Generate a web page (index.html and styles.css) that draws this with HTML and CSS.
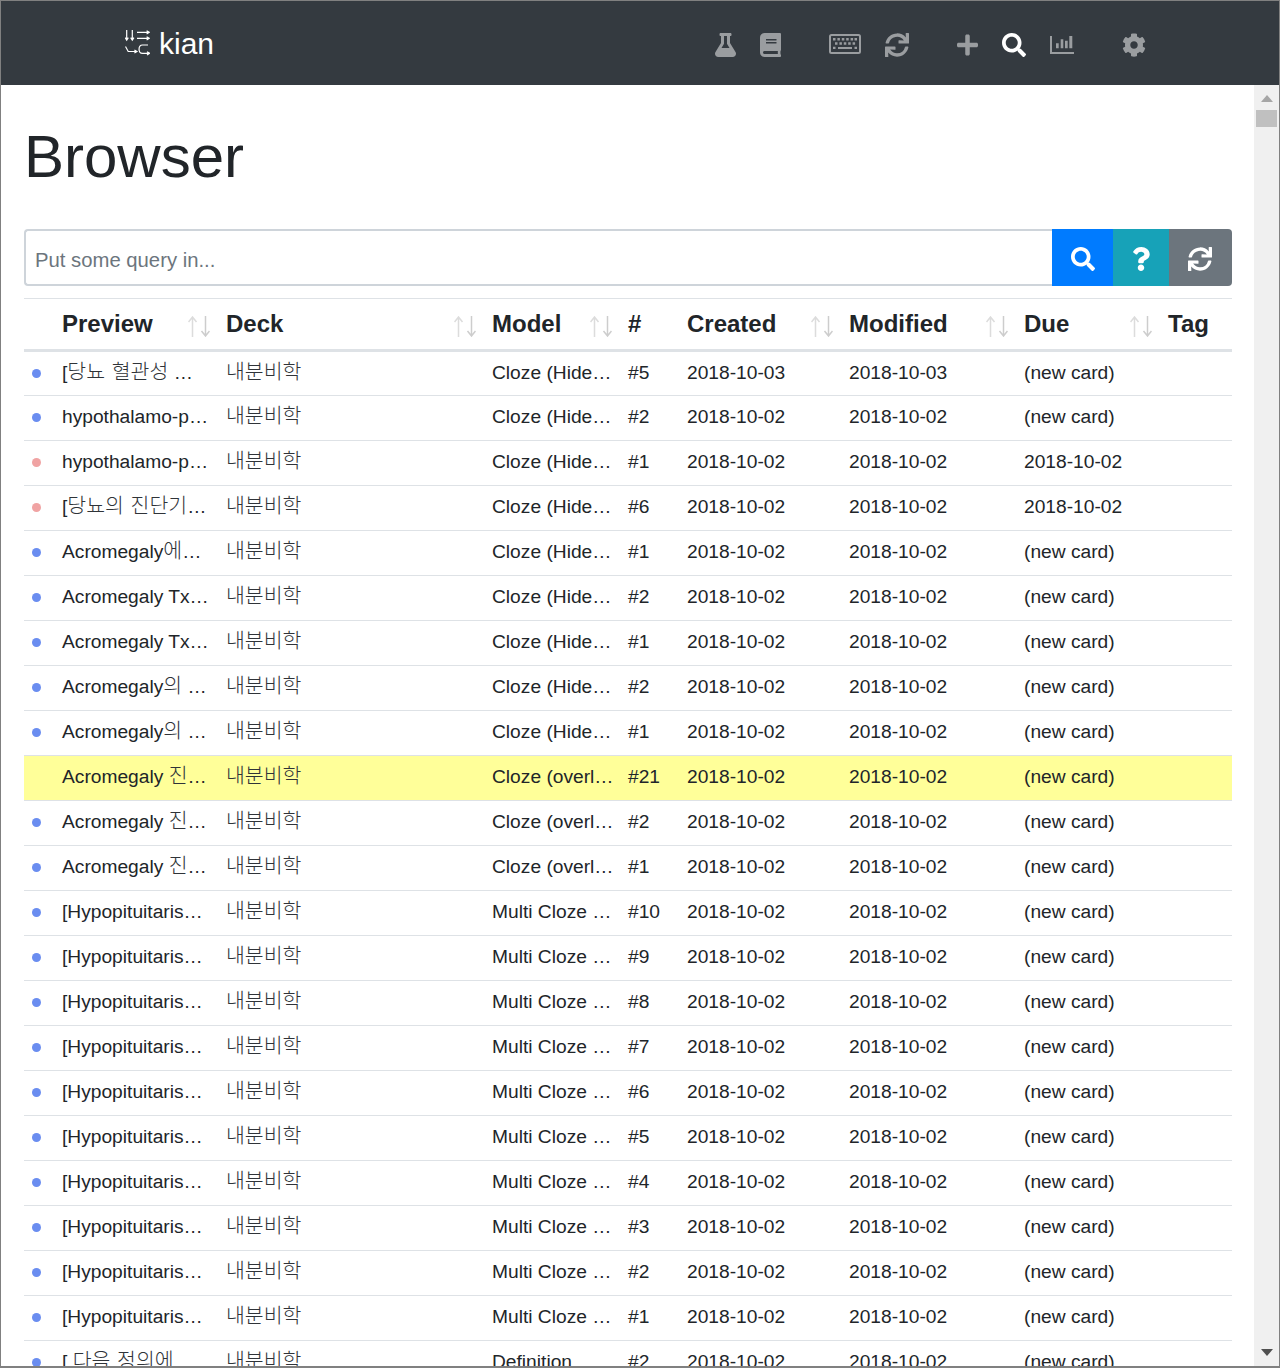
FILE: index.html
```html
<!DOCTYPE html>
<html lang="ko">
<head>
  <meta charset="UTF-8">
  <title>Browser - kian</title>
  <link rel="stylesheet" href="styles.css">
</head>
<body>
<svg class="defs" width="0" height="0">
  <symbol id="sort" viewBox="0 0 22 21">
    <path d="M4.500 21V1M.5 6l4-5 4 5" fill="none" stroke="#dcdcdc" stroke-width="1.500"/>
    <path d="M17.500 0v20M13.500 15l4 5 4-5" fill="none" stroke="#cdcdcd" stroke-width="1.500"/>
  </symbol>
</svg>
<div class="window">
  <header class="topbar">
    <a class="brand">
      <svg class="brand_icon" viewBox="0 0 25 26" fill="none" stroke="#fff" stroke-width="1.2">
        <path d="M1.7 0v10M.1 7.6l1.6 2.6 1.6-2.6M7.3 0v10M5.7 7.6l1.6 2.6 1.6-2.6"/>
        <path d="M12 2.3h12M21.6.7l2.6 1.6-2.6 1.6M12 8.3h12M21.6 6.7l2.6 1.6-2.6 1.6"/>
        <path d="M.5 16.5l2.7 5h8.6M9.4 19.9l2.6 1.6-2.6 1.6"/>
        <path d="M23 15h-5.500c-4.600 0-4.600 8.300 0 8.300H24.500M22 21.700l2.600 1.600-2.600 1.600"/>
      </svg>
      <span class="brand_name">kian</span>
    </a>
    <nav class="menu">
      <div class="menu_group">
        <svg class="ico" viewBox="0 0 448 512"><path d="M437.2 403.5L320 215V64h8c13.3 0 24-10.7 24-24V24c0-13.300-10.700-24-24-24H120c-13.300 0-24 10.700-24 24v16c0 13.300 10.700 24 24 24h8v151L10.800 403.500C-18.500 450.600 15.300 512 70.900 512h306.200c55.700 0 89.400-61.500 60.100-108.500zM137.900 320l48.200-77.600c3.700-5.200 5.800-11.600 5.800-18.400V64h64v160c0 6.900 2.200 13.200 5.800 18.400l48.200 77.600h-172z"/></svg>
        <svg class="ico" viewBox="0 0 448 512"><path d="M448 360V24c0-13.300-10.700-24-24-24H96C43 0 0 43 0 96v320c0 53 43 96 96 96h328c13.300 0 24-10.700 24-24v-16c0-7.500-3.500-14.300-8.900-18.700-4.200-15.400-4.200-59.300 0-74.700 5.400-4.300 8.900-11.100 8.900-18.600zM128 134c0-3.300 2.700-6 6-6h212c3.300 0 6 2.700 6 6v20c0 3.300-2.700 6-6 6H134c-3.300 0-6-2.700-6-6v-20zm0 64c0-3.300 2.700-6 6-6h212c3.300 0 6 2.700 6 6v20c0 3.300-2.700 6-6 6H134c-3.300 0-6-2.700-6-6v-20zm253.400 250H96c-17.700 0-32-14.300-32-32 0-17.600 14.400-32 32-32h285.400c-1.900 17.100-1.900 46.900 0 64z"/></svg>
      </div>
      <div class="menu_group">
        <svg class="ico ico_kbd" viewBox="0 0 32 24"><path transform="translate(0 -2)" fill-rule="evenodd" d="M2.500 3h27A2.500 2.500 0 0 1 32 5.500v15a2.500 2.500 0 0 1-2.500 2.500h-27A2.500 2.500 0 0 1 0 20.500v-15A2.500 2.500 0 0 1 2.500 3zm0 2a.5.5 0 0 0-.5.5v15a.5.5 0 0 0 .5.5h27a.5.5 0 0 0 .5-.5v-15a.5.5 0 0 0-.5-.5zM4 7h2.500v2.400H4zm4.400 0h2.500v2.400H8.400zm4.400 0h2.500v2.400h-2.500zm4.400 0h2.500v2.400h-2.500zm4.400 0h2.500v2.400h-2.500zm3.900 0H28v2.400h-2.500zM6 11.300h2.500v2.400H6zm4.400 0h2.500v2.400h-2.500zm4.400 0h2.500v2.400h-2.500zm4.400 0h2.500v2.400h-2.500zm4.400 0h2.500v2.400h-2.500zM4 15.700h2.500V18H4zm5 .4h14V18H9zm16.500-.4H28V18h-2.500z"/></svg>
        <svg class="ico" viewBox="0 0 512 512"><path d="M440.650 12.570l4 82.770A247.160 247.160 0 0 0 255.830 8C134.730 8 33.910 94.920 12.290 209.820A12 12 0 0 0 24.090 224h49.050a12 12 0 0 0 11.670-9.260 175.910 175.910 0 0 1 317-56.940l-101.460-4.860a12 12 0 0 0-12.570 12v47.410a12 12 0 0 0 12 12H500a12 12 0 0 0 12-12V12a12 12 0 0 0-12-12h-47.370a12 12 0 0 0-11.980 12.570zM255.830 432a175.610 175.610 0 0 1-146-77.800l101.800 4.870a12 12 0 0 0 12.570-12v-47.400a12 12 0 0 0-12-12H12a12 12 0 0 0-12 12V500a12 12 0 0 0 12 12h47.350a12 12 0 0 0 12-12.600l-4.150-82.570A247.170 247.170 0 0 0 255.830 504c121.110 0 221.930-86.920 243.550-201.820a12 12 0 0 0-11.800-14.180h-49.050a12 12 0 0 0-11.670 9.260A175.860 175.860 0 0 1 255.830 432z"/></svg>
      </div>
      <div class="menu_group">
        <svg class="ico" viewBox="0 0 448 512"><path d="M416 208H272V64c0-17.670-14.330-32-32-32h-32c-17.670 0-32 14.330-32 32v144H32c-17.670 0-32 14.330-32 32v32c0 17.670 14.330 32 32 32h144v144c0 17.670 14.330 32 32 32h32c17.670 0 32-14.330 32-32V304h144c17.670 0 32-14.330 32-32v-32c0-17.670-14.330-32-32-32z"/></svg>
        <svg class="ico ico_on" viewBox="0 0 512 512"><path d="M505 442.700L405.300 343c-4.500-4.500-10.600-7-17-7H372c27.600-35.300 44-79.700 44-128C416 93.100 322.900 0 208 0S0 93.100 0 208s93.100 208 208 208c48.300 0 92.700-16.400 128-44v16.300c0 6.400 2.500 12.500 7 17l99.700 99.700c9.400 9.400 24.600 9.400 33.900 0l28.300-28.300c9.400-9.400 9.400-24.600.1-34zM208 336c-70.700 0-128-57.200-128-128 0-70.700 57.200-128 128-128 70.700 0 128 57.200 128 128 0 70.700-57.200 128-128 128z"/></svg>
        <svg class="ico" viewBox="0 0 24 24"><path d="M0 3h2v16h22v2H0zM6 10.300h2.700v5H6zM10.700 6.300h2.600v9h-2.600zM15 7.700h2.700v7.600H15zM19.300 3h3v12.300h-3z"/></svg>
      </div>
      <div class="menu_group">
        <svg class="ico" viewBox="0 0 512 512"><path d="M487.400 315.700l-42.600-24.600c4.300-23.200 4.300-47 0-70.200l42.600-24.600c4.900-2.800 7.100-8.600 5.500-14-11.100-35.600-30-67.800-54.700-94.600-3.800-4.100-10-5.100-14.800-2.300L380.800 110c-17.900-15.400-38.500-27.300-60.800-35.100V25.800c0-5.600-3.900-10.500-9.400-11.700-36.700-8.200-74.300-7.800-109.200 0-5.500 1.200-9.400 6.100-9.400 11.700V75c-22.200 7.900-42.800 19.800-60.800 35.100L88.700 85.500c-4.900-2.800-11-1.900-14.800 2.300-24.700 26.700-43.600 58.900-54.700 94.600-1.700 5.400.6 11.200 5.500 14L67.300 221c-4.300 23.200-4.300 47 0 70.200l-42.600 24.600c-4.900 2.800-7.100 8.600-5.500 14 11.100 35.600 30 67.800 54.700 94.600 3.800 4.100 10 5.100 14.800 2.300l42.600-24.600c17.900 15.400 38.500 27.300 60.800 35.100v49.200c0 5.600 3.900 10.500 9.400 11.700 36.700 8.200 74.300 7.800 109.200 0 5.500-1.200 9.400-6.100 9.400-11.700v-49.200c22.200-7.900 42.800-19.800 60.800-35.100l42.600 24.600c4.900 2.800 11 1.900 14.800-2.300 24.700-26.700 43.600-58.900 54.700-94.600 1.500-5.500-.7-11.300-5.600-14.100zM256 336c-44.100 0-80-35.900-80-80s35.900-80 80-80 80 35.900 80 80-35.900 80-80 80z"/></svg>
      </div>
    </nav>
  </header>

  <div class="body_wrap">
    <main class="content">
      <h1 class="title">Browser</h1>

      <form class="search">
        <input class="search_input" type="text" placeholder="Put some query in...">
        <button class="btn btn_blue" type="button"><svg viewBox="0 0 512 512"><path d="M505 442.700L405.300 343c-4.500-4.500-10.600-7-17-7H372c27.600-35.300 44-79.700 44-128C416 93.100 322.900 0 208 0S0 93.100 0 208s93.100 208 208 208c48.300 0 92.700-16.400 128-44v16.300c0 6.400 2.500 12.500 7 17l99.700 99.700c9.400 9.400 24.600 9.400 33.900 0l28.300-28.300c9.400-9.400 9.400-24.600.1-34zM208 336c-70.700 0-128-57.200-128-128 0-70.700 57.200-128 128-128 70.700 0 128 57.200 128 128 0 70.700-57.200 128-128 128z"/></svg></button>
        <button class="btn btn_teal" type="button"><svg viewBox="0 0 384 512"><path d="M202.021 0C122.202 0 70.503 32.703 29.914 91.026c-7.363 10.580-5.093 25.086 5.178 32.874l43.138 32.709c10.373 7.865 25.132 6.026 33.253-4.148 25.049-31.381 43.630-49.449 82.757-49.449 30.764 0 68.816 19.799 68.816 49.631 0 22.552-18.617 34.134-48.993 51.164-35.423 19.860-82.299 44.576-82.299 106.405V320c0 13.255 10.745 24 24 24h72.471c13.255 0 24-10.745 24-24v-5.773c0-42.860 125.268-44.645 125.268-160.627C377.504 66.256 286.902 0 202.021 0zM192 373.459c-38.196 0-69.271 31.075-69.271 69.271 0 38.195 31.075 69.270 69.271 69.270s69.271-31.075 69.271-69.271-31.075-69.270-69.271-69.270z"/></svg></button>
        <button class="btn btn_gray" type="button"><svg viewBox="0 0 512 512"><path d="M440.650 12.570l4 82.770A247.160 247.160 0 0 0 255.830 8C134.730 8 33.910 94.920 12.290 209.820A12 12 0 0 0 24.090 224h49.050a12 12 0 0 0 11.670-9.260 175.910 175.910 0 0 1 317-56.940l-101.460-4.860a12 12 0 0 0-12.570 12v47.410a12 12 0 0 0 12 12H500a12 12 0 0 0 12-12V12a12 12 0 0 0-12-12h-47.370a12 12 0 0 0-11.980 12.570zM255.830 432a175.610 175.610 0 0 1-146-77.800l101.800 4.870a12 12 0 0 0 12.570-12v-47.400a12 12 0 0 0-12-12H12a12 12 0 0 0-12 12V500a12 12 0 0 0 12 12h47.350a12 12 0 0 0 12-12.600l-4.150-82.570A247.170 247.170 0 0 0 255.830 504c121.110 0 221.930-86.920 243.550-201.820a12 12 0 0 0-11.800-14.180h-49.050a12 12 0 0 0-11.670 9.260A175.860 175.860 0 0 1 255.830 432z"/></svg></button>
      </form>

      <table class="cards">
        <colgroup>
          <col class="c_dot"><col class="c_preview"><col class="c_deck"><col class="c_model"><col class="c_num"><col class="c_created"><col class="c_modified"><col class="c_due"><col class="c_tag">
        </colgroup>
        <thead>
          <tr>
            <th></th>
            <th><div class="th_in">Preview<svg class="sort"><use href="#sort"/></svg></div></th>
            <th><div class="th_in">Deck<svg class="sort"><use href="#sort"/></svg></div></th>
            <th><div class="th_in">Model<svg class="sort"><use href="#sort"/></svg></div></th>
            <th><div class="th_in">#</div></th>
            <th><div class="th_in">Created<svg class="sort"><use href="#sort"/></svg></div></th>
            <th><div class="th_in">Modified<svg class="sort"><use href="#sort"/></svg></div></th>
            <th><div class="th_in">Due<svg class="sort"><use href="#sort"/></svg></div></th>
            <th><div class="th_in">Tag</div></th>
          </tr>
        </thead>
        <tbody>
          <tr><td><i class="dot"></i></td><td>[<span class="ko">당뇨 혈관성</span> …</td><td class="deck ko">내분비학</td><td>Cloze (Hide…</td><td>#5</td><td>2018-10-03</td><td>2018-10-03</td><td>(new card)</td><td></td></tr>
          <tr><td><i class="dot"></i></td><td>hypothalamo-p…</td><td class="deck ko">내분비학</td><td>Cloze (Hide…</td><td>#2</td><td>2018-10-02</td><td>2018-10-02</td><td>(new card)</td><td></td></tr>
          <tr><td><i class="dot dot_pink"></i></td><td>hypothalamo-p…</td><td class="deck ko">내분비학</td><td>Cloze (Hide…</td><td>#1</td><td>2018-10-02</td><td>2018-10-02</td><td>2018-10-02</td><td></td></tr>
          <tr><td><i class="dot dot_pink"></i></td><td>[<span class="ko">당뇨의 진단기</span>…</td><td class="deck ko">내분비학</td><td>Cloze (Hide…</td><td>#6</td><td>2018-10-02</td><td>2018-10-02</td><td>2018-10-02</td><td></td></tr>
          <tr><td><i class="dot"></i></td><td>Acromegaly<span class="ko">에</span>…</td><td class="deck ko">내분비학</td><td>Cloze (Hide…</td><td>#1</td><td>2018-10-02</td><td>2018-10-02</td><td>(new card)</td><td></td></tr>
          <tr><td><i class="dot"></i></td><td>Acromegaly Tx…</td><td class="deck ko">내분비학</td><td>Cloze (Hide…</td><td>#2</td><td>2018-10-02</td><td>2018-10-02</td><td>(new card)</td><td></td></tr>
          <tr><td><i class="dot"></i></td><td>Acromegaly Tx…</td><td class="deck ko">내분비학</td><td>Cloze (Hide…</td><td>#1</td><td>2018-10-02</td><td>2018-10-02</td><td>(new card)</td><td></td></tr>
          <tr><td><i class="dot"></i></td><td>Acromegaly<span class="ko">의</span> …</td><td class="deck ko">내분비학</td><td>Cloze (Hide…</td><td>#2</td><td>2018-10-02</td><td>2018-10-02</td><td>(new card)</td><td></td></tr>
          <tr><td><i class="dot"></i></td><td>Acromegaly<span class="ko">의</span> …</td><td class="deck ko">내분비학</td><td>Cloze (Hide…</td><td>#1</td><td>2018-10-02</td><td>2018-10-02</td><td>(new card)</td><td></td></tr>
          <tr class="on"><td></td><td>Acromegaly <span class="ko">진</span>…</td><td class="deck ko">내분비학</td><td>Cloze (overl…</td><td>#21</td><td>2018-10-02</td><td>2018-10-02</td><td>(new card)</td><td></td></tr>
          <tr><td><i class="dot"></i></td><td>Acromegaly <span class="ko">진</span>…</td><td class="deck ko">내분비학</td><td>Cloze (overl…</td><td>#2</td><td>2018-10-02</td><td>2018-10-02</td><td>(new card)</td><td></td></tr>
          <tr><td><i class="dot"></i></td><td>Acromegaly <span class="ko">진</span>…</td><td class="deck ko">내분비학</td><td>Cloze (overl…</td><td>#1</td><td>2018-10-02</td><td>2018-10-02</td><td>(new card)</td><td></td></tr>
          <tr><td><i class="dot"></i></td><td>[Hypopituitaris…</td><td class="deck ko">내분비학</td><td>Multi Cloze …</td><td>#10</td><td>2018-10-02</td><td>2018-10-02</td><td>(new card)</td><td></td></tr>
          <tr><td><i class="dot"></i></td><td>[Hypopituitaris…</td><td class="deck ko">내분비학</td><td>Multi Cloze …</td><td>#9</td><td>2018-10-02</td><td>2018-10-02</td><td>(new card)</td><td></td></tr>
          <tr><td><i class="dot"></i></td><td>[Hypopituitaris…</td><td class="deck ko">내분비학</td><td>Multi Cloze …</td><td>#8</td><td>2018-10-02</td><td>2018-10-02</td><td>(new card)</td><td></td></tr>
          <tr><td><i class="dot"></i></td><td>[Hypopituitaris…</td><td class="deck ko">내분비학</td><td>Multi Cloze …</td><td>#7</td><td>2018-10-02</td><td>2018-10-02</td><td>(new card)</td><td></td></tr>
          <tr><td><i class="dot"></i></td><td>[Hypopituitaris…</td><td class="deck ko">내분비학</td><td>Multi Cloze …</td><td>#6</td><td>2018-10-02</td><td>2018-10-02</td><td>(new card)</td><td></td></tr>
          <tr><td><i class="dot"></i></td><td>[Hypopituitaris…</td><td class="deck ko">내분비학</td><td>Multi Cloze …</td><td>#5</td><td>2018-10-02</td><td>2018-10-02</td><td>(new card)</td><td></td></tr>
          <tr><td><i class="dot"></i></td><td>[Hypopituitaris…</td><td class="deck ko">내분비학</td><td>Multi Cloze …</td><td>#4</td><td>2018-10-02</td><td>2018-10-02</td><td>(new card)</td><td></td></tr>
          <tr><td><i class="dot"></i></td><td>[Hypopituitaris…</td><td class="deck ko">내분비학</td><td>Multi Cloze …</td><td>#3</td><td>2018-10-02</td><td>2018-10-02</td><td>(new card)</td><td></td></tr>
          <tr><td><i class="dot"></i></td><td>[Hypopituitaris…</td><td class="deck ko">내분비학</td><td>Multi Cloze …</td><td>#2</td><td>2018-10-02</td><td>2018-10-02</td><td>(new card)</td><td></td></tr>
          <tr><td><i class="dot"></i></td><td>[Hypopituitaris…</td><td class="deck ko">내분비학</td><td>Multi Cloze …</td><td>#1</td><td>2018-10-02</td><td>2018-10-02</td><td>(new card)</td><td></td></tr>
          <tr><td><i class="dot"></i></td><td>[ <span class="ko">다음 정의에</span> …</td><td class="deck ko">내분비학</td><td>Definition</td><td>#2</td><td>2018-10-02</td><td>2018-10-02</td><td>(new card)</td><td></td></tr>
        </tbody>
      </table>
    </main>

    <div class="scrollbar">
      <div class="sb_up"></div>
      <div class="sb_thumb"></div>
      <div class="sb_space"></div>
      <div class="sb_down"></div>
    </div>
  </div>
</div>
</body>
</html>
```

FILE: styles.css
```css
* { box-sizing: border-box; }

html, body { margin: 0; height: 100%; overflow: hidden; }

body {
  font-family: "Liberation Sans", "Noto Sans CJK KR", sans-serif;
  font-size: 19.2px;
  color: #212529;
  background: #fff;
}

.defs { display: block; height: 0; }

.window {
  height: 1368px;
  border: 1px solid #808080;
  border-bottom-width: 2px;
  display: flex;
  flex-direction: column;
  overflow: hidden;
}

/* top bar */
.topbar {
  flex: none;
  height: 84px;
  background: #343a40;
  display: flex;
  align-items: center;
  justify-content: space-between;
  padding: 0 133px 0 124px;
}

.brand {
  display: flex;
  align-items: center;
  color: #fff;
  font-size: 30px;
}

.brand_icon { width: 25px; height: 26px; margin-right: 9px; }
.brand_name { line-height: 26px; margin-top: 2px; }

.menu { display: flex; gap: 48px; padding-top: 4px; }
.menu_group { display: flex; align-items: center; gap: 24px; }

.ico { display: block; height: 24px; width: auto; fill: rgba(255,255,255,.5); }
.ico_on { fill: #fff; }
.ico_kbd { width: 32px; }

/* page */
.body_wrap { flex: 1; display: flex; min-height: 0; }

.content {
  flex: 1;
  min-width: 0;
  padding: 0 22px 0 23px;
  overflow: hidden;
}

.title {
  margin: 36px 0 36px;
  font-size: 60px;
  font-weight: 400;
  line-height: 72px;
}

/* search */
.search { display: flex; height: 57px; margin-bottom: 12px; }

.search_input {
  flex: 1;
  min-width: 0;
  border: 2px solid #ced4da;
  border-right: 0;
  border-radius: 4px 0 0 4px;
  padding: 6px 9px 0;
  font: inherit;
  font-size: 20.3px;
  color: #495057;
  outline: 0;
}
.search_input::placeholder { color: #6c757d; opacity: 1; }

.btn {
  flex: none;
  border: 0;
  padding: 2px 0 0;
  display: flex;
  align-items: center;
  justify-content: center;
}
.btn svg { display: block; height: 24px; fill: #fff; }

.btn_blue { width: 61px; background: #007bff; }
.btn_teal { width: 56px; background: #17a2b8; }
.btn_gray { width: 63px; padding-right: 2px; background: #6c757d; border-radius: 0 4px 4px 0; }

/* table */
.cards {
  width: 1208px;
  table-layout: fixed;
  border-collapse: collapse;
}

.c_dot { width: 26px; }
.c_preview { width: 164px; }
.c_deck { width: 266px; }
.c_model { width: 136px; }
.c_num { width: 59px; }
.c_created { width: 162px; }
.c_modified { width: 175px; }
.c_due { width: 144px; }
.c_tag { width: 76px; }

.cards th {
  height: 52px;
  padding: 0 4px 0 12px;
  border-top: 1px solid #dee2e6;
  border-bottom: 3px solid #dee2e6;
  font-size: 24px;
  font-weight: 700;
  text-align: left;
}

.th_in { display: flex; align-items: center; justify-content: space-between; white-space: nowrap; }

.sort { flex: none; width: 22px; height: 21px; margin-top: 4px; }

.cards td {
  height: 45px;
  padding: 0 2px 2px 12px;
  border-top: 1px solid #dee2e6;
  line-height: 22px;
  white-space: nowrap;
}

.cards tbody tr:first-child td { padding-bottom: 1px; border-top: 0; }

.cards tr.on td { background: #ffff99; }

.cards td:first-child { padding: 0 0 2px 8px; }
.cards tbody tr:first-child td:first-child { padding-bottom: 0; }

.ko { font-size: 20.5px; line-height: 1; font-weight: 300; word-spacing: 1px; color: #2f3338; }

.cards td.deck { padding-bottom: 4px; }
.cards tbody tr:first-child td.deck { padding-bottom: 3px; }

.dot {
  display: block;
  width: 9px;
  height: 9px;
  border-radius: 50%;
  background: #6a8df0;
}
.dot_pink { background: #f0a3a3; }

/* scrollbar */
.scrollbar {
  flex: none;
  width: 25px;
  background: #f0f0f0;
  display: flex;
  flex-direction: column;
  align-items: center;
}

.sb_up {
  width: 0; height: 0;
  margin-top: 10px;
  border: 6px solid transparent;
  border-top: 0;
  border-bottom: 7px solid #a6a6a6;
}

.sb_thumb { width: 21px; height: 17px; margin-top: 8px; background: #c0c0c0; }
.sb_space { flex: 1; }

.sb_down {
  width: 0; height: 0;
  margin-bottom: 10px;
  border: 6px solid transparent;
  border-bottom: 0;
  border-top: 7px solid #505050;
}
```
